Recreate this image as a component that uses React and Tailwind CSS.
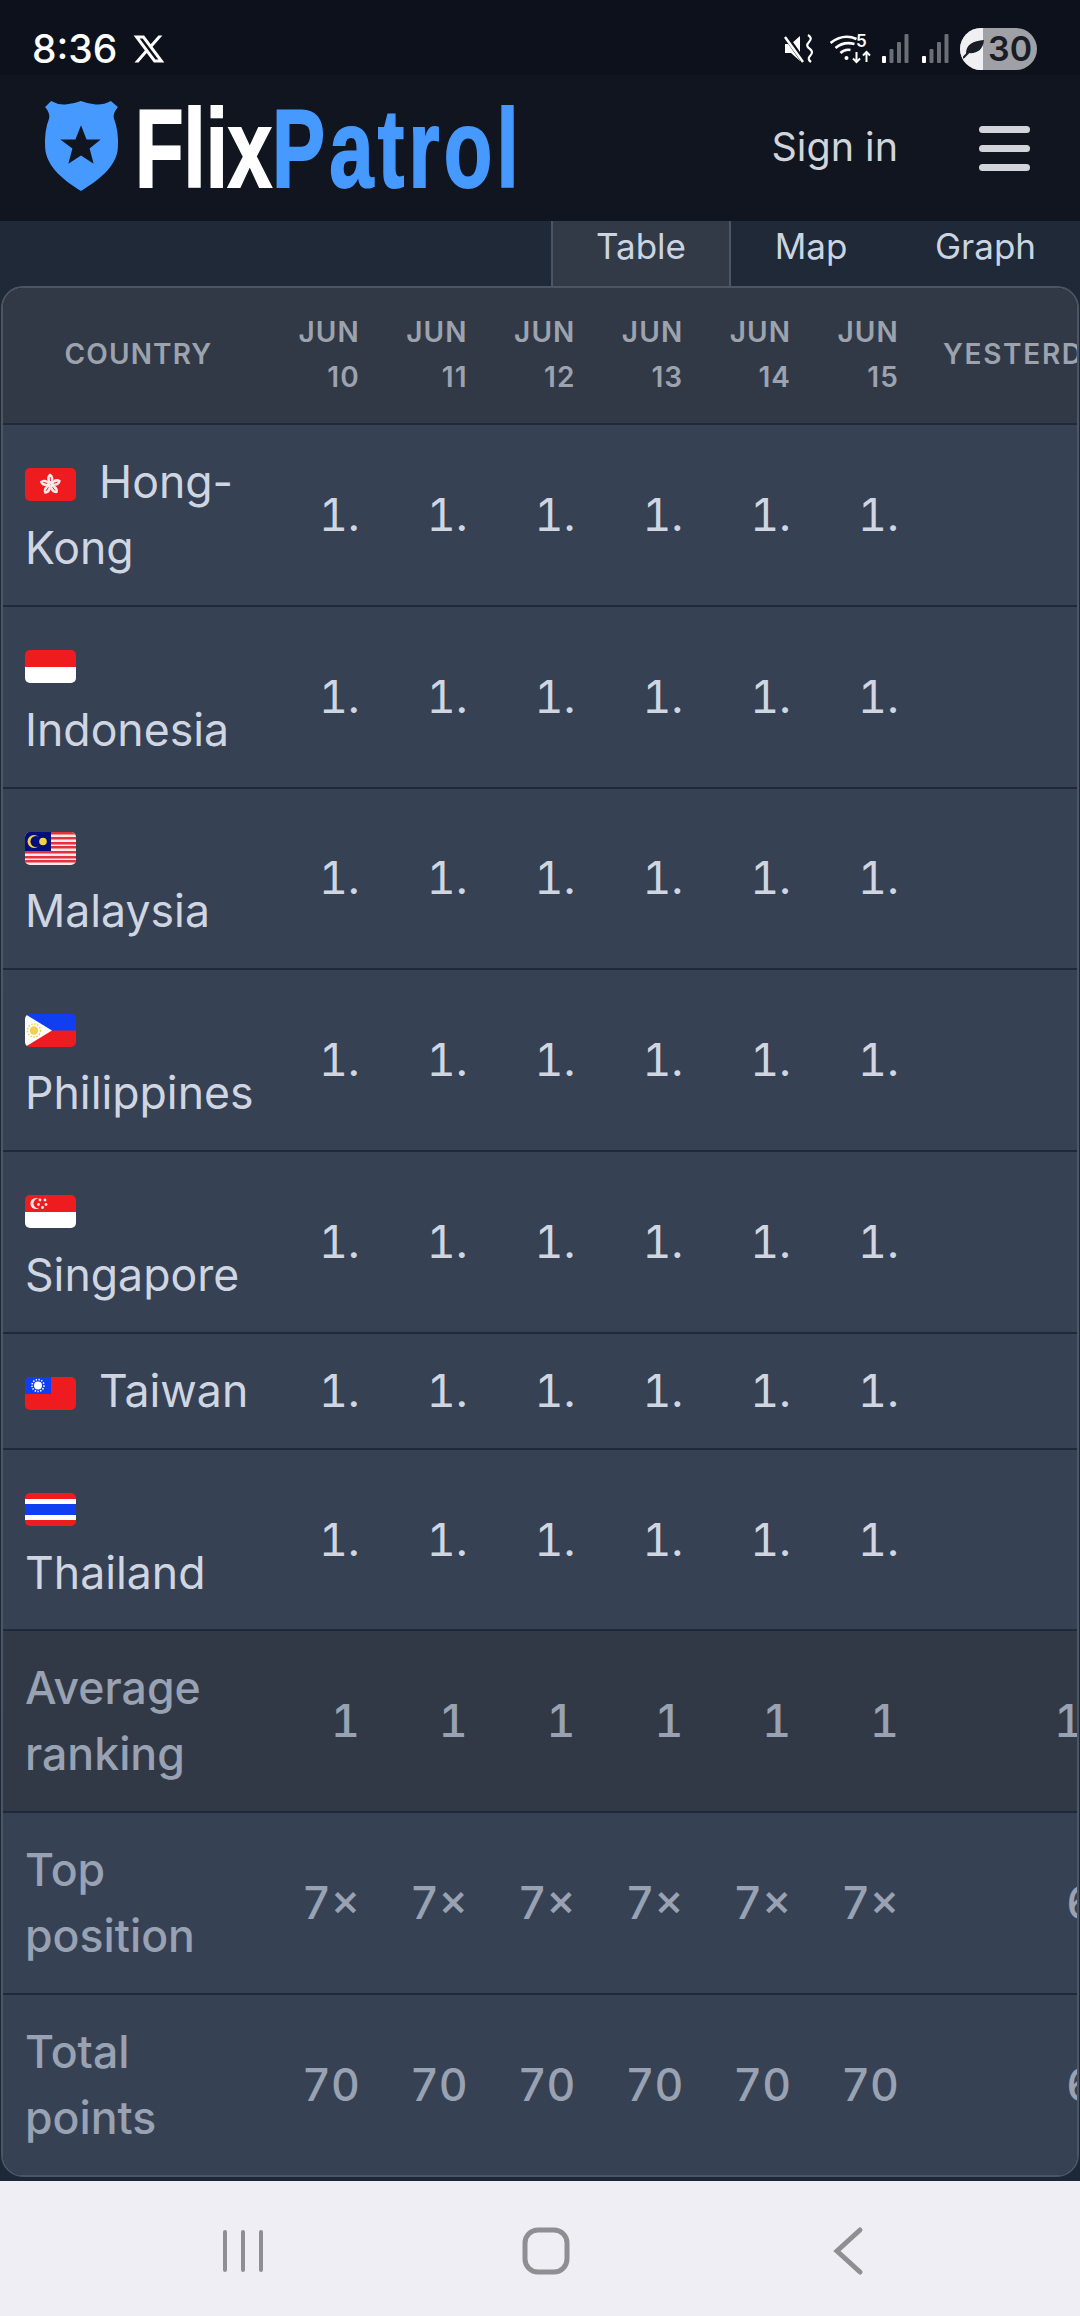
import React from "react";
import { RiTwitterXLine } from "react-icons/ri";

const flagClass = "inline-block w-[51px] h-[33px] rounded-[5px] align-middle mr-[23px] mt-[-2px]";

const HongKong = () => (
  <svg viewBox="0 0 51 33" className={flagClass}>
    <rect width="51" height="33" fill="#ee1c1f" />
    {[0, 72, 144, 216, 288].map((a) => (
      <g key={a} transform={`rotate(${a} 25.5 16.5)`}>
        <path d="M25.5 16.5 C21 13 21 8 25 5.5 C29.5 8 29.5 13 25.5 16.5 Z" fill="#fbe9e9" />
        <path d="M25.3 9 L25.5 13" stroke="#ee1c1f" strokeWidth="0.9" />
      </g>
    ))}
  </svg>
);

const Indonesia = () => (
  <svg viewBox="0 0 51 33" className={flagClass}>
    <rect width="51" height="17" fill="#ee1c1f" />
    <rect y="17" width="51" height="16" fill="#ffffff" />
  </svg>
);

const Malaysia = () => (
  <svg viewBox="0 0 51 33" className={flagClass}>
    <rect width="51" height="33" fill="#fbe9e9" />
    {[0, 5, 10, 14, 19, 24, 28].map((y) => (
      <rect key={y} y={y} width="51" height="2.5" fill="#e2333b" />
    ))}
    <rect width="26" height="19" fill="#010e7c" />
    <circle cx="9" cy="9.5" r="6.5" fill="#f5cf45" />
    <circle cx="11" cy="9.5" r="5.5" fill="#010e7c" />
    <circle cx="18" cy="9.5" r="3.8" fill="#f5cf45" />
  </svg>
);

const Philippines = () => (
  <svg viewBox="0 0 51 33" className={flagClass}>
    <rect width="51" height="17" fill="#0f3ff0" />
    <rect y="16.5" width="51" height="16.5" fill="#ee1c1f" />
    <path d="M0 0 L27 16.5 L0 33 Z" fill="#fdfdf8" />
    <circle cx="9" cy="16.5" r="4.2" fill="#f3d04c" />
    <circle cx="9" cy="16.5" r="6.5" fill="none" stroke="#f3d04c" strokeWidth="1.5" strokeDasharray="1.5 1.5" />
  </svg>
);

const Singapore = () => (
  <svg viewBox="0 0 51 33" className={flagClass}>
    <rect width="51" height="17" fill="#ee1c1f" />
    <rect y="17" width="51" height="16" fill="#ffffff" />
    <circle cx="11" cy="8.5" r="5.6" fill="#fbe9e9" />
    <circle cx="13.5" cy="8.5" r="5" fill="#ee1c1f" />
    {[[15, 5], [20, 5], [13.5, 9.5], [21, 9.5], [17.5, 12.5]].map(([x, y]) => (
      <circle key={`${x}-${y}`} cx={x} cy={y} r="1.4" fill="#fbe9e9" />
    ))}
  </svg>
);

const Taiwan = () => (
  <svg viewBox="0 0 51 33" className={flagClass}>
    <rect width="51" height="33" fill="#ee1c1f" />
    <rect width="26" height="17" fill="#0f3ff0" />
    <circle cx="13" cy="8.5" r="4" fill="#ffffff" />
    <circle cx="13" cy="8.5" r="6" fill="none" stroke="#ffffff" strokeWidth="1.6" strokeDasharray="1.4 1.4" />
  </svg>
);

const Thailand = () => (
  <svg viewBox="0 0 51 33" className={flagClass}>
    <rect width="51" height="33" fill="#ee1c1f" />
    <rect y="6" width="51" height="21" fill="#ffffff" />
    <rect y="11" width="51" height="11" fill="#0f3ff0" />
  </svg>
);

const countries = [
  { name: "Hong-Kong", Flag: HongKong },
  { name: "Indonesia", Flag: Indonesia },
  { name: "Malaysia", Flag: Malaysia },
  { name: "Philippines", Flag: Philippines },
  { name: "Singapore", Flag: Singapore },
  { name: "Taiwan", Flag: Taiwan },
  { name: "Thailand", Flag: Thailand },
];

const days = ["10", "11", "12", "13", "14", "15"];

// bottom rows of the table
const summary = [
  { label: "Average ranking", values: ["1", "1", "1", "1", "1", "1", "1.1"], dark: true },
  { label: "Top position", values: ["7×", "7×", "7×", "7×", "7×", "7×", "6×"] },
  { label: "Total points", values: ["70", "70", "70", "70", "70", "70", "66"] },
];

const Signal = () => (
  <svg viewBox="0 0 27 29" className="w-[27px] h-[29px]">
    <rect x="0" y="22" width="4" height="7" rx="1" fill="#ffffff" />
    <rect x="7.5" y="15" width="4" height="14" rx="1" fill="#6b6e76" />
    <rect x="15" y="8" width="4" height="21" rx="1" fill="#6b6e76" />
    <rect x="22.5" y="0" width="4" height="29" rx="1" fill="#6b6e76" />
  </svg>
);

const StatusBar = () => (
  <div className="h-[75px] bg-[#0d111b] flex items-center pt-[22px] pl-[32px] pr-[43px] text-white">
    <span className="text-[39px] font-medium leading-none">8:36</span>
    <RiTwitterXLine className="ml-[14px] w-[36px] h-[36px]" />
    <div className="ml-auto flex items-center">
      <svg viewBox="0 0 30 30" className="w-[30px] h-[30px]">
        <path d="M1 10 h6 l9 -8 v25 l-9 -8 h-6 z" fill="#ffffff" />
        <path d="M1 1 L20 28" stroke="#0d111b" strokeWidth="5" />
        <path d="M1 3 L19 28" stroke="#ffffff" strokeWidth="2.5" />
        <path d="M24 1 q5 3 1 7 q-4 4 1 7 q4 3 0 7 q-3 3 1 6" fill="none" stroke="#ffffff" strokeWidth="2.2" />
      </svg>
      <div className="relative ml-[16px] w-[42px] h-[30px]">
        <svg viewBox="0 0 41 30" className="w-[42px] h-[30px]">
          <path d="M0 9 Q13 -1 26 5" fill="none" stroke="#ffffff" strokeWidth="2.6" />
          <path d="M5 14 Q13 7 24 10" fill="none" stroke="#ffffff" strokeWidth="2.6" />
          <path d="M10 19 Q14 15 20 16" fill="none" stroke="#ffffff" strokeWidth="2.6" />
          <circle cx="16" cy="24" r="2" fill="#ffffff" />
          <path d="M26 18 v10 M22.5 24.5 L26 28 L29.5 24.5" fill="none" stroke="#ffffff" strokeWidth="2" />
          <path d="M36 28 v-10 M32.5 21.5 L36 18 L39.5 21.5" fill="none" stroke="#ffffff" strokeWidth="2" />
        </svg>
        <span className="absolute left-[26px] top-[-3px] text-[17px] leading-[20px] font-semibold">5</span>
      </div>
      <div className="ml-[10px]"><Signal /></div>
      <div className="ml-[13px]"><Signal /></div>
      <div className="relative ml-[11px] w-[77px] h-[42px] rounded-full overflow-hidden bg-[#9fa1a6]">
        <div className="w-[23px] h-full bg-[#f0f0f2]" />
        <svg viewBox="0 0 22 20" className="absolute left-[3px] top-[11px] w-[22px] h-[20px]">
          <path d="M3 15 C3 5 10 2 21 1 C20 11 14 15 5 14 Z" fill="#1a1d25" />
          <path d="M0 19 L9 10" stroke="#1a1d25" strokeWidth="2" />
        </svg>
        <span className="absolute left-[28px] top-0 text-[34px] leading-[42px] font-semibold text-[#1a1d25]">30</span>
      </div>
    </div>
  </div>
);

const Header = () => (
  <div className="h-[146px] bg-[#10151f] flex items-center pl-[44px] pr-[50px]">
    <svg viewBox="0 0 72 89" className="w-[75px] h-[90px] mt-[-4px] shrink-0">
      <path
        d="M0 6 L6 0 Q13 4 20 3.5 Q28 3 35.5 0 Q43 3 50 3.5 Q58 4 65 0 L72 6 Q67 12 68 17 Q73 30 72 46 C71 66 50 80 35.5 89 C21 80 1 66 0 46 Q-1 30 4 17 Q5 12 0 6 Z"
        fill="#4699ff"
      />
      <path d="M35.5 24 L41 38 L55 38 L44 47 L48 62 L35.5 54 L23 62 L27 47 L15 38 L30 38 Z" fill="#10151f" />
    </svg>
    <div className="ml-[16px] w-[370px] mt-[2px]">
      <div className="origin-left scale-x-[0.71] w-[520px] text-[112px] leading-[112px] font-bold font-['Liberation_Sans',sans-serif] [-webkit-text-stroke:2px_currentColor] text-white whitespace-nowrap">
        Flix<span className="text-[#4699ff] tracking-[6px]">Patrol</span>
      </div>
    </div>
    <span className="ml-auto mt-[-2px] text-[39.5px] leading-[66px] text-[#d1d5db]">Sign in</span>
    <div className="ml-[81px] w-[51px] flex flex-col gap-[12px]">
      <div className="h-[7px] rounded-full bg-[#d1d5db]" />
      <div className="h-[7px] rounded-full bg-[#d1d5db]" />
      <div className="h-[7px] rounded-full bg-[#d1d5db]" />
    </div>
  </div>
);

const Tabs = () => (
  <div className="h-[65px] flex justify-end text-[35px] leading-[50px] text-[#cbd5e1]">
    <div className="w-[180px] pb-[16px] flex items-center justify-center bg-[#323a48] border-x-2 border-[#4b5563]">Table</div>
    <div className="w-[160px] pb-[16px] flex items-center justify-center">Map</div>
    <div className="w-[189px] pb-[16px] flex items-center justify-center">Graph</div>
  </div>
);

const headCell = "px-[22px] pt-[22px] pb-[24px] border-b-2 border-[#1f2937] bg-[#323946] text-[28px] leading-[44.5px] font-semibold text-[#9ca3af]";

const RankTable = () => (
  <div className="mx-[1px] border-2 border-[#4b5563] rounded-[22px] overflow-hidden">
    <table className="w-[1143px] table-fixed border-separate border-spacing-0">
      <colgroup>
        <col className="w-[271px]" />
        {days.map((d) => (
          <col key={d} className="w-[107.8px]" />
        ))}
        <col className="w-[225px]" />
      </colgroup>
      <thead>
        <tr>
          <th className={`${headCell} text-center tracking-[0.04em]`}>COUNTRY</th>
          {days.map((d) => (
            <th key={d} className={`${headCell} text-right tracking-[0.04em]`}>
              JUN
              <br />
              {d}
            </th>
          ))}
          <th className={`${headCell} text-right tracking-[0.06em]`}>YESTERDAY</th>
        </tr>
      </thead>
      <tbody>
        {countries.map(({ name, Flag }) => (
          <tr key={name} className="bg-[#374154] text-[#cfd6e1]">
            <td className="pl-[22px] pr-[22px] py-[23.9px] border-b-2 border-[#1f2937]">
              <Flag />
              {name}
            </td>
            {[...days, "y"].map((d) => (
              <td key={d} className="px-[22px] py-[23.9px] border-b-2 border-[#1f2937] text-right tabular-nums">
                1.
              </td>
            ))}
          </tr>
        ))}
        {summary.map((row, i) => (
          <tr key={row.label} className={`font-medium text-[#98a2b3] ${row.dark ? "bg-[#323946]" : "bg-[#374154]"}`}>
            <td className={`pl-[22px] pr-[22px] py-[23.9px] border-[#1f2937] ${i < 2 ? "border-b-2" : ""}`}>{row.label}</td>
            {row.values.map((v, j) => (
              <td key={j} className={`px-[22px] py-[23.9px] border-[#1f2937] text-right tabular-nums ${i < 2 ? "border-b-2" : ""}`}>
                {v}
              </td>
            ))}
          </tr>
        ))}
      </tbody>
    </table>
  </div>
);

const NavBar = () => (
  <div className="h-[135px] bg-[#eeeef4] flex items-center shrink-0">
    <svg viewBox="0 0 1080 135" className="w-[1080px] h-[135px]">
      <g stroke="#8e8e93" strokeWidth="4" strokeLinecap="round" fill="none">
        <path d="M225 51 V89 M243 51 V89 M261 51 V89" />
        <rect x="525" y="49" width="42" height="42" rx="13" strokeWidth="5" />
        <path d="M860 49 L837 70 L860 91" strokeWidth="5" />
      </g>
    </svg>
  </div>
);

export default function App() {
  return (
    <div className="w-[1080px] h-[2316px] flex flex-col bg-[#1f2937] overflow-hidden text-[44.6px] leading-[66px] font-['Inter',sans-serif]">
      <StatusBar />
      <Header />
      <div className="flex-1 overflow-hidden bg-gradient-to-b from-[#1f2937] to-[#1c2738]">
        <Tabs />
        <RankTable />
      </div>
      <NavBar />
    </div>
  );
}
